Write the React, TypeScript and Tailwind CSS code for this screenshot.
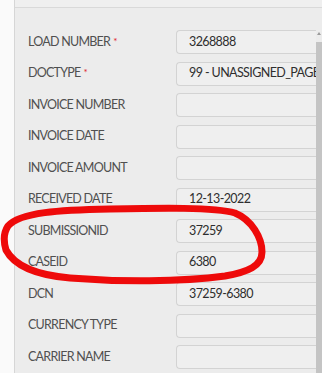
import React from "react";

const fields: { label: string; value?: string; required?: boolean }[] = [
  { label: "LOAD NUMBER", value: "3268888", required: true },
  { label: "DOCTYPE", value: "99 - UNASSIGNED_PAGES", required: true },
  { label: "INVOICE NUMBER" },
  { label: "INVOICE DATE" },
  { label: "INVOICE AMOUNT" },
  { label: "RECEIVED DATE", value: "12-13-2022" },
  { label: "SUBMISSIONID", value: "37259" },
  { label: "CASEID", value: "6380" },
  { label: "DCN", value: "37259-6380" },
  { label: "CURRENCY TYPE" },
  { label: "CARRIER NAME" },
];

export default function App() {
  return (
    <div
      className="relative flex w-[322px] h-[373px] overflow-hidden bg-white"
      style={{ fontFamily: "Lato, 'Open Sans', sans-serif" }}
    >
      <div className="w-[14px] shrink-0 bg-[#fafafa]" />
      <div className="flex-1 min-w-0 flex flex-col border-l border-[#d6d6d6] bg-[#ececec]">
        <div className="h-[8px] shrink-0 border-b border-[#d9d9d9] bg-[#efefef]" />
        <div className="flex flex-col gap-y-[7.5px] pt-[22px] pl-[13px]">
          {fields.map((f) => (
            <div key={f.label} className="flex items-center h-[24px]">
              <div className="w-[148px] shrink-0 text-[12.5px] tracking-[-0.75px] text-[#505050] leading-none">
                {f.label}
                {f.required && <span className="text-[#e0192b] text-[10px] align-top ml-[3px]">*</span>}
              </div>
              <div className="flex-1 h-[24px] flex items-center pl-[12px] rounded-l-[4px] border border-r-0 border-[#d3d3d3] bg-[#efefef] text-[12.5px] tracking-[-0.6px] text-[#2e2e2e] whitespace-nowrap overflow-hidden">
                {f.value}
              </div>
            </div>
          ))}
        </div>
      </div>
      <div className="w-[6px] shrink-0 flex flex-col bg-[#ececec]">
        <div className="h-[8px] border-b border-[#d9d9d9] bg-[#efefef]" />
        <div className="h-[34px] flex justify-center pt-[24px]">
          <div className="w-0 h-0 border-l-[2px] border-r-[2px] border-b-[3px] border-l-transparent border-r-transparent border-b-[#9a9a9a]" />
        </div>
        <div className="flex-1 bg-[#c4c4c4]" />
      </div>
      <svg
        className="absolute inset-0 pointer-events-none"
        width="322"
        height="373"
        viewBox="0 0 322 373"
      >
        <path
          d="M8 226 C 20 212, 60 210, 110 209 C 160 208, 215 207, 235 213 C 252 220, 262 238, 262 252 C 262 266, 248 272, 225 276 C 180 282, 120 282, 70 278 C 35 275, 14 265, 6 250 C 3 240, 4 232, 8 226 Z"
          fill="none"
          stroke="#ee0a0a"
          strokeWidth="7"
          strokeLinecap="round"
        />
      </svg>
    </div>
  );
}
